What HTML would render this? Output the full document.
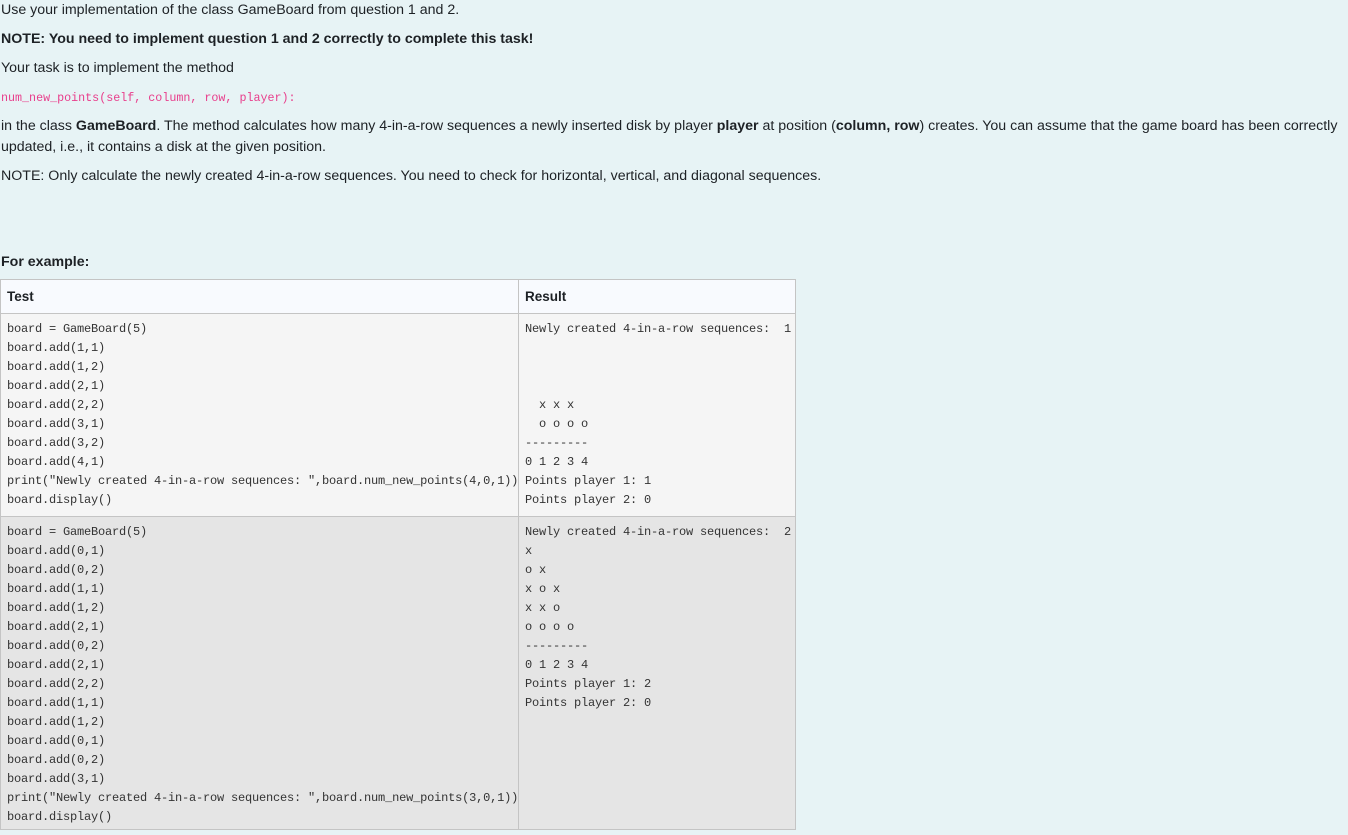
<!DOCTYPE html>
<html><head><meta charset="utf-8"><style>
body{margin:0;width:1348px;height:835px;background:#e7f3f5;font-family:"Liberation Sans",sans-serif;font-size:14.2px;color:#1d2125;position:relative;overflow:hidden}
.t{position:absolute;left:1px;white-space:nowrap;line-height:20px}
.m{font-family:"Liberation Mono",monospace}
table{position:absolute;left:0;top:279px;border-collapse:collapse;width:795px;table-layout:fixed}
td,th{border:1px solid #c4c4c4;vertical-align:top;text-align:left;padding:0 6px;overflow:hidden}
th{background:#f8fafe;height:33px;font-weight:bold;font-size:13.5px;vertical-align:middle}
pre{margin:0;font-family:"Liberation Mono",monospace;font-size:12px;letter-spacing:-0.2px;line-height:19px;color:#333}
.r1 td{background:#f5f5f5;padding-top:6px;padding-bottom:6px}
.r2 td{background:#e5e5e5;padding-top:6px;padding-bottom:2px}
</style></head><body>
<div class="t" style="top:0px">Use your implementation of the class GameBoard from question 1 and 2.</div>
<div class="t" style="top:29px;font-weight:bold">NOTE: You need to implement question 1 and 2 correctly to complete this task!</div>
<div class="t" style="top:58px">Your task is to implement the method</div>
<div class="t m" style="top:88px;font-size:11.7px;color:#e83e8c">num_new_points(self, column, row, player):</div>
<div class="t" style="top:116px">in the class <b>GameBoard</b>. The method calculates how many 4-in-a-row sequences a newly inserted disk by player <b>player</b> at position (<b>column, row</b>) creates. You can assume that the game board has been correctly</div>
<div class="t" style="top:137px">updated, i.e., it contains a disk at the given position.</div>
<div class="t" style="top:166px">NOTE: Only calculate the newly created 4-in-a-row sequences. You need to check for horizontal, vertical, and diagonal sequences.</div>
<div class="t" style="top:252px;font-weight:bold">For example:</div>
<table>
<colgroup><col style="width:518px"><col style="width:277px"></colgroup>
<tr><th>Test</th><th>Result</th></tr>
<tr class="r1"><td><pre>board = GameBoard(5)
board.add(1,1)
board.add(1,2)
board.add(2,1)
board.add(2,2)
board.add(3,1)
board.add(3,2)
board.add(4,1)
print("Newly created 4-in-a-row sequences: ",board.num_new_points(4,0,1))
board.display()</pre></td><td><pre>Newly created 4-in-a-row sequences:  1



  x x x
  o o o o
---------
0 1 2 3 4
Points player 1: 1
Points player 2: 0</pre></td></tr>
<tr class="r2"><td><pre>board = GameBoard(5)
board.add(0,1)
board.add(0,2)
board.add(1,1)
board.add(1,2)
board.add(2,1)
board.add(0,2)
board.add(2,1)
board.add(2,2)
board.add(1,1)
board.add(1,2)
board.add(0,1)
board.add(0,2)
board.add(3,1)
print("Newly created 4-in-a-row sequences: ",board.num_new_points(3,0,1))
board.display()</pre></td><td><pre>Newly created 4-in-a-row sequences:  2
x
o x
x o x
x x o
o o o o
---------
0 1 2 3 4
Points player 1: 2
Points player 2: 0</pre></td></tr>
</table>
</body></html>
